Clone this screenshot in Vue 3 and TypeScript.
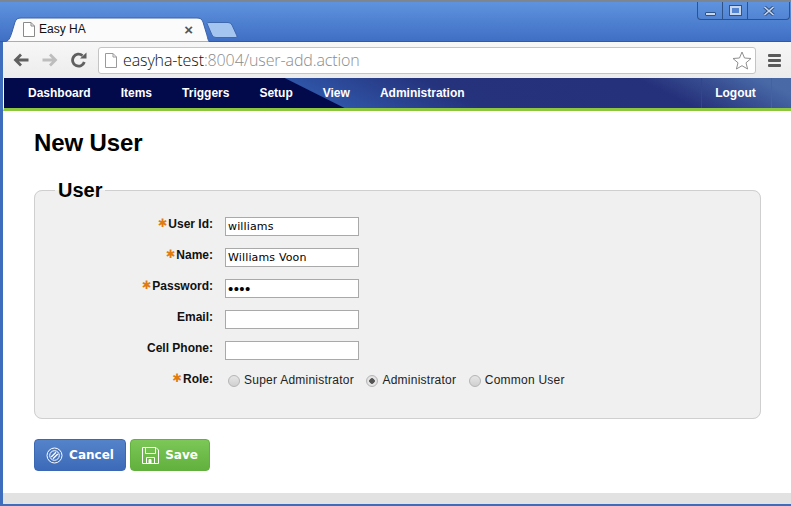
<script setup lang="ts">
interface Field { label: string; value: string; type: string; required: boolean }
const fields: Field[] = [
  { label: 'User Id:', value: 'williams', type: 'text', required: true },
  { label: 'Name:', value: 'Williams Voon', type: 'text', required: true },
  { label: 'Password:', value: 'abcd', type: 'password', required: true },
  { label: 'Email:', value: '', type: 'text', required: false },
  { label: 'Cell Phone:', value: '', type: 'text', required: false },
]
const navItems = ['Dashboard', 'Items', 'Triggers', 'Setup', 'View', 'Administration']
const roles = [
  { name: 'Super Administrator', checked: false },
  { name: 'Administrator', checked: true },
  { name: 'Common User', checked: false },
]
</script>

<template>
  <div class="window">
    <header class="titlebar">
      <div class="controls">
        <div class="ctl ctl-min"><span class="min-glyph"></span></div>
        <div class="ctl ctl-max"><span class="max-glyph"></span></div>
        <div class="ctl ctl-close">
          <svg width="12" height="10" viewBox="0 0 12 10">
            <path d="M1.5 1 L10.5 9 M10.5 1 L1.5 9" stroke="#2f4f80" stroke-width="3.4" fill="none" />
            <path d="M1.5 1 L10.5 9 M10.5 1 L1.5 9" stroke="#c8d6ec" stroke-width="1.6" fill="none" />
          </svg>
        </div>
      </div>
      <div class="tabstrip">
        <div class="tab">
          <svg class="tab-shape" width="206" height="25" viewBox="0 0 206 25">
            <path d="M0 25 C6 25 7 21 9 15 L12 5 C13 2 15 1 18 1 L194 1 C197 1 199 2 200 5 L203 15 C205 21 205 25 207 25 Z" fill="#fbfbfb" stroke="#3a62a8" stroke-width="1" />
          </svg>
          <svg class="page-icon" width="12" height="15" viewBox="0 0 12 15">
            <path d="M.5.5 H8 L11.5 4 V14.5 H.5 Z M8 .5 V4 H11.5" fill="#fff" stroke="#8a8a8a" />
          </svg>
          <span class="tab-title">Easy HA</span>
          <span class="tab-close">×</span>
        </div>
        <svg class="newtab" width="32" height="16" viewBox="0 0 32 16">
          <path d="M1 1.5 Q1 .5 3 .5 H22 Q25 .5 26 3 L31 14 Q31.500 15.500 30 15.500 H10 Q7 15.500 6 13 Z" fill="#a3c5f0" stroke="#3f68ad" />
        </svg>
      </div>
    </header>

    <div class="page">
      <div class="toolbar">
        <svg class="tool" width="16" height="14" viewBox="0 0 16 14">
          <path d="M15.500 7 H4 M8 1.500 L2.500 7 L8 12.500" fill="none" stroke="#5f5f5f" stroke-width="2.800" />
        </svg>
        <svg class="tool" width="16" height="14" viewBox="0 0 16 14">
          <path d="M.5 7 H12 M8 1.500 L13.500 7 L8 12.500" fill="none" stroke="#bdbdbd" stroke-width="2.800" />
        </svg>
        <svg class="tool" width="16" height="16" viewBox="0 0 16 16">
          <path d="M13.300 10 A6 6 0 1 1 11.500 3.600" fill="none" stroke="#5f5f5f" stroke-width="2.800" />
          <path d="M9 6.500 H15.500 V0.500 Z" fill="#5f5f5f" />
        </svg>
        <div class="omnibox">
          <svg class="omni-page" width="12" height="15" viewBox="0 0 12 15">
            <path d="M.5.5 H8 L11.500 4 V14.500 H.5 Z M8 .5 V4 H11.500" fill="#fff" stroke="#9a9a9a" />
          </svg>
          <span class="url"><span class="host">easyha-test</span>:8004/user-add.action</span>
          <svg class="star" width="20" height="19" viewBox="0 0 20 19">
            <path d="M10 1 L12.500 7 L19 7.500 L14 11.800 L15.600 18 L10 14.700 L4.400 18 L6 11.800 L1 7.500 L7.500 7 Z" fill="#fff" stroke="#8f8f8f" />
          </svg>
        </div>
        <div class="menu"><span></span><span></span><span></span></div>
      </div>

      <nav class="nav">
        <div class="nav-items">
          <a v-for="item in navItems" :key="item">{{ item }}</a>
        </div>
        <a class="logout">Logout</a>
      </nav>

      <main class="content">
        <h1>New User</h1>
        <fieldset class="box">
          <legend>User</legend>
          <div class="grid">
            <template v-for="f in fields" :key="f.label">
              <label class="lbl"><span v-if="f.required" class="req">✱</span>{{ f.label }}</label>
              <input class="inp" :class="{ pw: f.type === 'password' }" :type="f.type" :value="f.value" />
            </template>
            <label class="lbl"><span class="req">✱</span>Role:</label>
            <div class="roles">
              <label v-for="r in roles" :key="r.name" class="role">
                <input type="radio" name="role" :checked="r.checked" />{{ r.name }}
              </label>
            </div>
          </div>
        </fieldset>
        <div class="actions">
          <button class="btn cancel" type="button">
            <svg width="17" height="17" viewBox="0 0 17 17" fill="none" stroke="#fff">
              <circle cx="8.500" cy="8.500" r="7.500" />
              <circle cx="8.500" cy="8.500" r="4.800" />
              <path d="M5.200 10 L10 5.200 M7 11.800 L11.800 7" stroke-width="1.300" />
            </svg>
            Cancel
          </button>
          <button class="btn save" type="button">
            <svg width="17" height="17" viewBox="0 0 17 17" fill="none" stroke="#fff">
              <path d="M.5.5 H14 L16.500 3 V16.500 H.5 Z" />
              <path d="M3.500.5 V6.500 H13.500 V.5 M4.500 16.500 V10.500 H12.500 V16.500" />
              <path d="M7 12.500 H9 V16 H7 Z" fill="#fff" />
            </svg>
            Save
          </button>
        </div>
      </main>

      <div class="statusbar"></div>
    </div>
  </div>
</template>

<style scoped>
.window {
  width: 791px;
  height: 506px;
  display: flex;
  flex-direction: column;
  overflow: hidden;
  background: #3f6dbd;
  font-family: "Liberation Sans", Arial, sans-serif;
}
.titlebar {
  height: 42px;
  flex: none;
  box-sizing: border-box;
  border-top: 2px solid #7d8590;
  border-bottom: 1px solid #2f5aa5;
  background: linear-gradient(#5f93de, #3f6fc4);
  display: flex;
  flex-direction: column;
  justify-content: flex-end;
  position: relative;
}
.controls {
  position: absolute;
  top: 0;
  right: 1px;
  display: flex;
  height: 17px;
  border: 1px solid #2d5389;
  border-top: 0;
  border-radius: 0 0 4px 4px;
  overflow: hidden;
}
.ctl {
  box-sizing: border-box;
  display: flex;
  align-items: center;
  justify-content: center;
  border-right: 1px solid #2d5389;
}
.ctl-min { width: 25px; }
.ctl-max { width: 25px; }
.ctl-close { width: 41px; border-right: 0; }
.min-glyph {
  width: 11px;
  height: 4px;
  margin-top: 7px;
  background: #c8d6ec;
  border: 1px solid #2d5389;
  border-radius: 1px;
  box-sizing: border-box;
}
.max-glyph {
  width: 11px;
  height: 9px;
  box-sizing: border-box;
  border: 2px solid #c8d6ec;
  outline: 1px solid #2d5389;
  background: #5585d0;
}
.tabstrip {
  display: flex;
  align-items: flex-start;
  height: 24px;
  padding-left: 3px;
  margin-bottom: -1px;
}
.tab {
  position: relative;
  width: 200px;
  height: 24px;
  display: flex;
  align-items: center;
  padding: 0 0 2px 20px;
  box-sizing: border-box;
}
.tab-shape { position: absolute; left: 0; top: -1px; }
.page-icon { position: relative; margin: 0 4px 0 0; flex: none; }
.tab-title { position: relative; font-size: 12px; color: #111; flex: 1; }
.tab-close { position: relative; font-size: 15px; color: #555; margin-right: 10px; font-weight: bold; line-height: 1; }
.newtab { margin: 4px 0 0 3px; }
.page {
  flex: 1;
  min-height: 0;
  margin-left: 3px;
  display: flex;
  flex-direction: column;
}
.toolbar {
  height: 36px;
  flex: none;
  box-sizing: border-box;
  background: linear-gradient(#f7f7f7, #ececec);
  display: flex;
  align-items: center;
  padding: 0 10px 0 10px;
}
.tool { flex: none; margin-right: 13px; }
.omnibox {
  margin-left: -2px;
  width: 658px;
  height: 27px;
  box-sizing: border-box;
  flex: none;
  background: #fff;
  border: 1px solid #c4c4c4;
  border-radius: 3px;
  display: flex;
  align-items: center;
  padding: 0 3px 0 6px;
}
.omni-page { flex: none; }
.url {
  flex: 1;
  margin-left: 6px;
  font-family: "Open Sans", sans-serif;
  font-size: 16px;
  font-weight: 300;
  letter-spacing: -.11px;
  color: #8c8c8c;
  white-space: nowrap;
}
.host { color: #111; }
.menu {
  margin-left: 12px;
  width: 13px;
  display: flex;
  flex-direction: column;
  gap: 2px;
}
.menu span { height: 3px; background: #5a5a5a; border-radius: 1px; }
.nav {
  height: 33px;
  flex: none;
  box-sizing: border-box;
  border-bottom: 3px solid #8dc63f;
  border-left: 1px solid #fff;
  display: flex;
  align-items: center;
  justify-content: space-between;
  background:
    linear-gradient(26.6deg, rgba(75, 110, 170, 0) 310px, rgba(75, 110, 170, .92) 365px),
    linear-gradient(26.6deg, #020a4c 152px, #2f54a6 153px, #25327c 215px, #25307a 100%);
}
.nav a { color: #fff; font-weight: bold; font-size: 12px; }
.nav-items { display: flex; gap: 30px; padding-left: 24px; }
.logout {
  align-self: stretch;
  width: 71px;
  box-sizing: border-box;
  margin-right: 19px;
  padding-right: 2px;
  border-left: 1px solid #2b4a86;
  border-right: 1px solid #3a66a8;
  display: flex;
  align-items: center;
  justify-content: center;
}
.content {
  flex: 1;
  min-height: 0;
  box-sizing: border-box;
  padding: 0 27px 0 31px;
  background: #fff;
}
h1 {
  margin: 18px 0 0;
  font-size: 24px;
  line-height: 28px;
  font-weight: bold;
  letter-spacing: -.1px;
  color: #000;
}
.box {
  margin: 23px 3px 0 0;
  padding: 0;
  height: 239px;
  box-sizing: border-box;
  background: #f0f0f0;
  border: 1px solid #cfcfcf;
  border-radius: 8px;
  min-width: 0;
}
legend {
  margin-left: 20px;
  padding: 0 3px;
  font-size: 20px;
  line-height: 20px;
  font-weight: bold;
  color: #000;
}
.grid {
  display: grid;
  grid-template-columns: 178px 1fr;
  column-gap: 12px;
  row-gap: 11px;
  grid-auto-rows: 20px;
  padding-top: 17px;
}
.lbl {
  font-size: 12px;
  font-weight: bold;
  color: #111;
  text-align: right;
  line-height: 14px;
}
.req {
  font-family: "DejaVu Sans", sans-serif;
  color: #e07b10;
  font-size: 11.500px;
  font-weight: bold;
  line-height: 10px;
  margin-right: 1px;
  vertical-align: 1px;
}
.inp {
  width: 134px;
  height: 19px;
  box-sizing: border-box;
  margin: 0;
  padding: 0 2px;
  background: #fff;
  border: 1px solid #a9a9a9;
  border-radius: 0;
  outline: 0;
  font-family: "DejaVu Sans", sans-serif;
  font-size: 11px;
  letter-spacing: .15px;
  color: #000;
}
.inp.pw { font-family: "Liberation Sans", sans-serif; font-size: 15px; letter-spacing: .4px; }
.roles { display: flex; align-items: center; gap: 12.500px; padding-left: 3px; height: 15px; }
.role {
  display: flex;
  align-items: center;
  gap: 4px;
  font-size: 12px;
  letter-spacing: .24px;
  color: #222;
  white-space: nowrap;
}
.role input {
  appearance: none;
  width: 12px;
  height: 12px;
  margin: 2px 0 0;
  border: 1px solid #b5b5b5;
  border-radius: 50%;
  background: linear-gradient(#e6e6e6, #d0d0d0);
  box-sizing: border-box;
}
.role input:checked {
  background: radial-gradient(circle, #555 0 2.500px, #e8e8e8 3px, #d8d8d8 100%);
}
.actions { display: flex; gap: 4px; margin-top: 20px; }
.btn {
  height: 32px;
  box-sizing: border-box;
  display: flex;
  align-items: center;
  justify-content: center;
  gap: 6px;
  padding: 0;
  font-family: "DejaVu Sans", sans-serif;
  font-size: 12px;
  font-weight: bold;
  color: #fff;
  border-radius: 4px;
  cursor: pointer;
}
.cancel {
  width: 92px;
  background: linear-gradient(#5583ca, #3d6ab8);
  border: 1px solid #3b67b3;
}
.save {
  width: 80px;
  background: linear-gradient(#7cc757, #62b03e);
  border: 1px solid #62b03e;
}
.statusbar {
  height: 11px;
  flex: none;
  background: #e2e2e2;
  margin-bottom: 2px;
}
</style>

<style>
html, body { margin: 0; padding: 0; background: #fff; }
</style>
